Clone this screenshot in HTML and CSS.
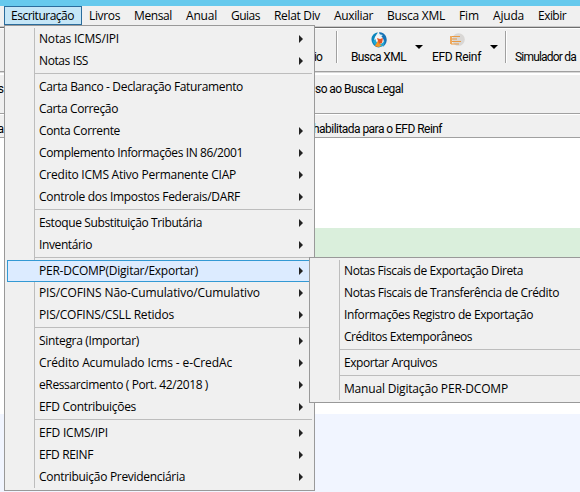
FILE: index.html
```html
<!DOCTYPE html>
<html lang="pt-BR">
<head>
<meta charset="utf-8">
<title>Escrituração</title>
<link rel="stylesheet" href="styles.css">
</head>
<body>
<div class="titlebar"></div>
<nav class="menubar">
  <span class="active" data-w="63">Escrituração</span><span data-w="31">Livros</span><span data-w="38">Mensal</span><span data-w="31">Anual</span><span data-w="29">Guias</span><span data-w="46">Relat Div</span><span data-w="39">Auxiliar</span><span data-w="58">Busca XML</span><span data-w="20">Fim</span><span data-w="31">Ajuda</span><span data-w="28">Exibir</span>
</nav>
<div class="toolbar">
  <span class="cut" data-w="8">io</span>
  <i class="divider"></i>
  <div class="tool xml">
    <svg width="16" height="16" viewBox="0 0 16 16"><path d="M7 .5C2 1 0 5 .6 8.500 1.300 13 5 16 9 15.400 4 13 2 9 4 5c1-2 2-3 3-4.500z" fill="#0b86bd"/><path d="M8 .4c5-.6 8 4 7.700 8-.2 3-2 5-4 6.600C14 10 13 6 9 3z" fill="#1672b5"/><path d="M2 9c1 4 4 6 8 6 3-1 4-4 3.500-7-1 3-3 4-5 3.500C6 11 5 9 6 6z" fill="#20a8d4"/><path d="M4 5l4-2 4 4-1 4-4 1-2-3z" fill="#f4f6f7"/><path d="M6 6l3 1 3-1-1 5-3 1-1 3-3-1 2-3 1-2z" fill="#e95523"/><path d="M4 14l3-5 1 3 3 1-3 2z" fill="#f39a25"/><path d="M7 2l5 1-3 2z" fill="#d9f4fa"/></svg>
    <span data-w="55">Busca XML</span>
  </div>
  <i class="drop"></i>
  <div class="tool reinf">
    <svg width="16" height="14" viewBox="0 0 16 14"><ellipse cx="9.500" cy="6.500" rx="6.300" ry="6.300" fill="#d9d7d5"/><path d="M2 3.500h9M1 6h7M2 8.500h10M2 11h8" stroke="#e99a43" stroke-width="1.200"/><path d="M2 3v8" stroke="#efa95c" stroke-width="2"/></svg>
    <span data-w="49">EFD Reinf</span>
  </div>
  <i class="drop"></i>
  <i class="divider second"></i>
  <span class="sim" data-w="61">Simulador da</span>
</div>
<div class="panel legal"><b>s</b><span data-w="88">so ao Busca Legal</span></div>
<div class="panel notice"><b>a</b><span class="tucked" data-w="129">habilitada para o EFD Reinf</span></div>
<main class="content"><div class="green"></div><div class="blue"></div></main>

<div class="menu main-menu">
  <div class="item sub"><span data-w="80">Notas ICMS/IPI</span></div>
  <div class="item sub"><span data-w="49">Notas ISS</span></div>
  <hr>
  <div class="item"><span data-w="204">Carta Banco - Declaração Faturamento</span></div>
  <div class="item"><span data-w="79">Carta Correção</span></div>
  <div class="item sub"><span data-w="81">Conta Corrente</span></div>
  <div class="item sub"><span data-w="204">Complemento Informações IN 86/2001</span></div>
  <div class="item sub"><span data-w="197">Credito ICMS Ativo Permanente CIAP</span></div>
  <div class="item sub"><span data-w="201">Controle dos Impostos Federais/DARF</span></div>
  <hr>
  <div class="item sub"><span data-w="163">Estoque Substituição Tributária</span></div>
  <div class="item sub"><span data-w="53">Inventário</span></div>
  <hr>
  <div class="item sub selected"><span data-w="159">PER-DCOMP(Digitar/Exportar)</span></div>
  <div class="item sub"><span data-w="221">PIS/COFINS Não-Cumulativo/Cumulativo</span></div>
  <div class="item sub"><span data-w="135">PIS/COFINS/CSLL Retidos</span></div>
  <hr>
  <div class="item sub"><span data-w="100">Sintegra (Importar)</span></div>
  <div class="item sub"><span data-w="193">Crédito Acumulado Icms - e-CredAc</span></div>
  <div class="item sub"><span data-w="169">eRessarcimento ( Port. 42/2018 )</span></div>
  <div class="item sub"><span data-w="97">EFD Contribuições</span></div>
  <hr>
  <div class="item sub"><span data-w="69">EFD ICMS/IPI</span></div>
  <div class="item sub"><span data-w="54">EFD REINF</span></div>
  <div class="item sub"><span data-w="146">Contribuição Previdenciária</span></div>
</div>

<div class="menu submenu">
  <div class="item"><span data-w="179">Notas Fiscais de Exportação Direta</span></div>
  <div class="item"><span data-w="215">Notas Fiscais de Transferência de Crédito</span></div>
  <div class="item"><span data-w="189">Informações Registro de Exportação</span></div>
  <div class="item"><span data-w="128">Créditos Extemporâneos</span></div>
  <hr>
  <div class="item"><span data-w="93">Exportar Arquivos</span></div>
  <hr>
  <div class="item"><span data-w="164">Manual Digitação PER-DCOMP</span></div>
</div>
<script src="labels.js"></script>
</body>
</html>
```
FILE: styles.css
```css
* { box-sizing: border-box; }
body {
  margin: 0;
  width: 580px;
  height: 492px;
  overflow: hidden;
  background: #fff;
  color: #000;
  font: 12px/20px "Open Sans", "Noto Sans", sans-serif;
}
span { white-space: nowrap; }
.titlebar { height: 6px; background: #66c9ed; }
.menubar {
  display: flex;
  height: 20px;
  padding-left: 4px;
  background: #f0f0f0;
}
.menubar span {
  flex: none;
  height: 19px;
  padding: 0 6px;
  border: 1px solid transparent;
  line-height: 18px;
}
.menubar .active {
  padding-right: 7px;
  background: #c5e6f7;
  border-color: #2a6c9c;
}
.toolbar {
  display: flex;
  height: 45px;
  border-top: 1px solid #c8c8c8;
  box-shadow: inset 0 1px #6e6e6e, inset 0 2px #fff;
  background: #f0f0f0;
  padding-left: 314px;
  font: 12px/14px Roboto, "Liberation Sans", sans-serif;
}
.cut { width: 22px; margin-top: 23px; }
.divider { width: 1px; height: 32px; margin-top: 4px; background: #a0a0a0; box-shadow: 1px 0 #fff; }
.tool { display: flex; flex-direction: column; align-items: center; height: 40px; }
.xml { width: 55px; margin: 5px 0 0 14px; }
.xml span { margin-top: 2px; }
.reinf { width: 49px; margin: 6px 0 0 9px; }
.reinf span { margin-top: 3px; }
.drop { margin: 18px 0 0 9px; width: 8px; height: 4px; background: #000; clip-path: polygon(0 0, 100% 0, 50% 100%); }
.second { margin-left: 7px; }
.sim { margin: 23px 0 0 9px; }
.panel {
  display: flex;
  background: #f0f0f0;
  font: 12px/14px Roboto, "Liberation Sans", sans-serif;
}
.panel b {
  display: flex;
  justify-content: flex-end;
  width: 4px;
  margin-right: 311px;
  font-weight: normal;
}
.tucked { margin-left: -2px; }
.legal {
  height: 43px;
  padding-top: 10px;
  border-top: 1px solid #a0a0a0;
  border-bottom: 1px solid #a0a0a0;
  box-shadow: inset 0 1px #d8d8d8, inset 0 3px #fff;
}
.notice { height: 24px; padding-top: 8px; border-bottom: 1px solid #a0a0a0; box-shadow: inset 0 1px #fff; }
.content { height: 354px; padding-top: 90px; }
.green { height: 30px; margin-left: 315px; background: #daefdc; }
.blue { height: 78px; margin-top: 156px; background: #f1f5ff; }
.menu {
  position: absolute;
  padding: 2px;
  border: 1px solid #999;
  background: linear-gradient(#bdbdbd, #bdbdbd) 29px 2px / 1px calc(100% - 4px) no-repeat, #f0f0f0;
}
.main-menu { left: 4px; top: 25px; width: 311px; height: 466px; }
.submenu { left: 309px; top: 257px; width: 280px; height: 146px; }
.item {
  display: flex;
  align-items: center;
  justify-content: space-between;
  height: 22px;
  padding: 0 9px 0 32px;
}
.sub::after { content: ""; width: 4px; height: 8px; background: #222; clip-path: polygon(0 0, 100% 50%, 0 100%); }
.selected { padding: 0 8px 0 31px; background: #dcebff; border: 1px solid #3399d4; }
hr { height: 1px; margin: 1px 0 2px 28px; border: 0; background: #bdbdbd; }
```
FILE: labels.js
```js
// Spread each label over its nominal width.
document.querySelectorAll("[data-w]").forEach(function (label) {
  var range = document.createRange();
  range.selectNodeContents(label);
  var natural = range.getBoundingClientRect().width;
  var spacing = (Number(label.dataset.w) - natural) / label.textContent.length;
  label.style.letterSpacing = spacing.toFixed(3) + "px";
});
```
